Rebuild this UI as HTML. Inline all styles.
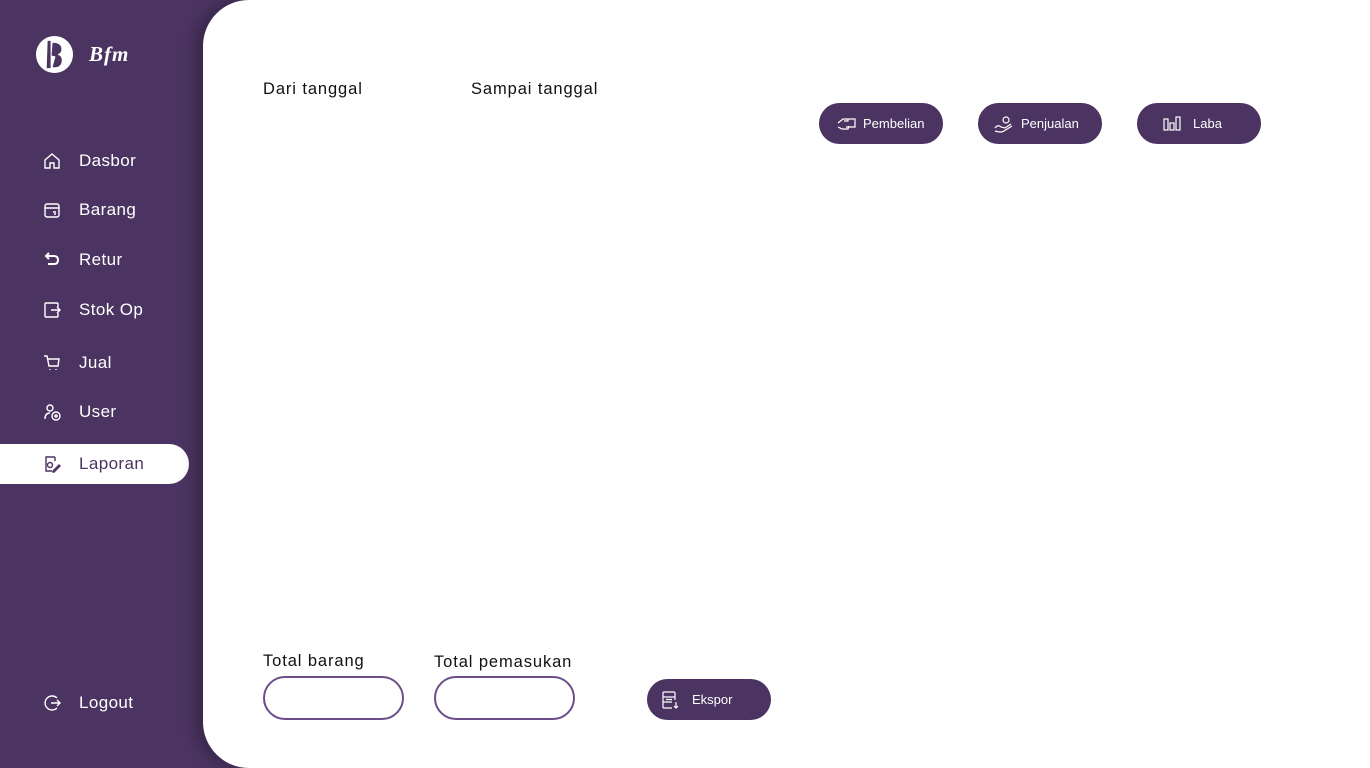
<!DOCTYPE html>
<html><head><meta charset="utf-8"><style>
*{margin:0;padding:0;box-sizing:border-box}
body{width:1370px;height:768px;background:#4b3461;font-family:"Liberation Sans",sans-serif;position:relative;overflow:hidden}
.side{position:absolute;left:0;top:0;width:203px;height:768px;background:#4b3461}
.main{position:absolute;left:203px;top:0;width:1167px;height:768px;background:#fff;border-radius:46px 0 0 46px;box-shadow:-8px 0 14px rgba(0,0,0,.25)}
.nav{position:absolute;left:0;color:#fff;font-size:17px;height:40px;display:flex;align-items:center;white-space:nowrap;letter-spacing:.4px}
.nav svg{position:absolute;left:42px;width:20px;height:20px}
.nav span{position:absolute;left:79px}
.active{background:#fff;width:189px;border-radius:0 20px 20px 0;color:#4b3461}
.lbl{position:absolute;font-size:16.5px;color:#111;white-space:nowrap;letter-spacing:.9px}
.btn{position:absolute;background:#4b3461;color:#fff;border-radius:21px;height:41px;width:124px;font-size:13px;display:flex;align-items:center;white-space:nowrap}
.btn svg{position:absolute;width:22px;height:20px}
.inp{position:absolute;border:2px solid #6b4d8a;border-radius:22px;width:141px;height:44px;top:676px}
</style></head><body>
<div class="side">
<svg style="position:absolute;left:35px;top:35px" width="39" height="39" viewBox="0 0 40 40"><circle cx="20" cy="20" r="19" fill="#fff"/><path d="M13 6 L16 6 L16 34 L12 34 Z M18 8 Q28 8 27 16 Q26 19 23 20 Q29 22 27 29 Q25 34 18 33 L21 22 L17 21 Z" fill="#4b3461"/></svg>
<div style="position:absolute;left:89px;top:42px;color:#fff;font:italic 900 21px 'Liberation Serif',serif;letter-spacing:1px">Bfm</div>
<div class="nav" style="top:141px"><svg viewBox="0 0 20 20" fill="none" stroke="#fff" stroke-width="1.4"><path d="M3 9 L10 3 L17 9 V17 H12 V12 H8 V17 H3 Z"/></svg><span>Dasbor</span></div>
<div class="nav" style="top:190px"><svg viewBox="0 0 20 20" fill="none" stroke="#fff" stroke-width="1.4"><rect x="3" y="4" width="14" height="13" rx="2"/><path d="M3 8H17M11 12h3M12 14h2"/></svg><span>Barang</span></div>
<div class="nav" style="top:240px"><svg viewBox="0 0 20 20" fill="none" stroke="#fff" stroke-width="2"><path d="M4 6 H12 Q16 6 16 10 Q16 14 12 14 H6 M7 3 L4 6 L7 9"/></svg><span>Retur</span></div>
<div class="nav" style="top:290px"><svg viewBox="0 0 20 20" fill="none" stroke="#fff" stroke-width="1.4"><path d="M16 7V4a1 1 0 0 0-1-1H4a1 1 0 0 0-1 1v12a1 1 0 0 0 1 1h11a1 1 0 0 0 1-1v-3M9 10h9M15 7l3 3-3 3"/></svg><span>Stok Op</span></div>
<div class="nav" style="top:343px"><svg viewBox="0 0 20 20" fill="none" stroke="#fff" stroke-width="1.4"><path d="M2 3h3l2 10h9l1-7H6M8 16v1M14 16v1"/></svg><span>Jual</span></div>
<div class="nav" style="top:392px"><svg viewBox="0 0 20 20" fill="none" stroke="#fff" stroke-width="1.4"><circle cx="8" cy="6" r="3"/><path d="M3 17q0-6 5-6"/><circle cx="14" cy="14" r="4"/><path d="M14 12v4M12 14h4"/></svg><span>User</span></div>
<div class="nav active" style="top:444px"><svg viewBox="0 0 20 20" fill="none" stroke="#4b3461" stroke-width="1.4"><path d="M13 3H4v14h6M13 3v4M4 3"/><circle cx="8" cy="11" r="2.5"/><path d="M11 17l6-6 1 1-6 6h-1z"/></svg><span>Laporan</span></div>
<div class="nav" style="top:683px"><svg viewBox="0 0 20 20" fill="none" stroke="#fff" stroke-width="1.4"><path d="M15 5A7 7 0 1 0 15 15M9 10h9M15 7l3 3-3 3"/></svg><span>Logout</span></div>
</div>
<div class="main"></div>
<div class="lbl" style="left:263px;top:80px">Dari tanggal</div>
<div class="lbl" style="left:471px;top:80px">Sampai tanggal</div>
<div class="btn" style="left:819px;top:103px"><svg style="left:17px" viewBox="0 0 22 20" fill="none" stroke="#fff" stroke-width="1.2"><path d="M8 5h11v8H10M2 9l5-4h5v2H8M2 13l4 2h6l1-3"/></svg><span style="position:absolute;left:44px">Pembelian</span></div>
<div class="btn" style="left:978px;top:103px"><svg style="left:15px" viewBox="0 0 22 20" fill="none" stroke="#fff" stroke-width="1.2"><circle cx="13" cy="6" r="3"/><path d="M2 14q3-4 6-1l4 1 6-4M2 17q6 2 9 0l8-5"/></svg><span style="position:absolute;left:43px">Penjualan</span></div>
<div class="btn" style="left:1137px;top:103px"><svg style="left:24px" viewBox="0 0 22 20" fill="none" stroke="#fff" stroke-width="1.2"><rect x="3" y="5" width="4" height="11"/><rect x="9" y="9" width="4" height="7"/><rect x="15" y="3" width="4" height="13"/></svg><span style="position:absolute;left:56px">Laba</span></div>
<div class="lbl" style="left:263px;top:652px">Total barang</div>
<div class="lbl" style="left:434px;top:653px">Total pemasukan</div>
<div class="inp" style="left:263px"></div>
<div class="inp" style="left:434px"></div>
<div class="btn" style="left:647px;top:679px"><svg style="left:13px" viewBox="0 0 22 20" fill="none" stroke="#fff" stroke-width="1.2"><path d="M15 10V3a1 1 0 0 0-1-1H4a1 1 0 0 0-1 1v14a1 1 0 0 0 1 1h8M3 7h12M3 12h9M6 9.5h6M16 12v6M14 16l2 2 2-2"/></svg><span style="position:absolute;left:45px">Ekspor</span></div>
</body></html>
